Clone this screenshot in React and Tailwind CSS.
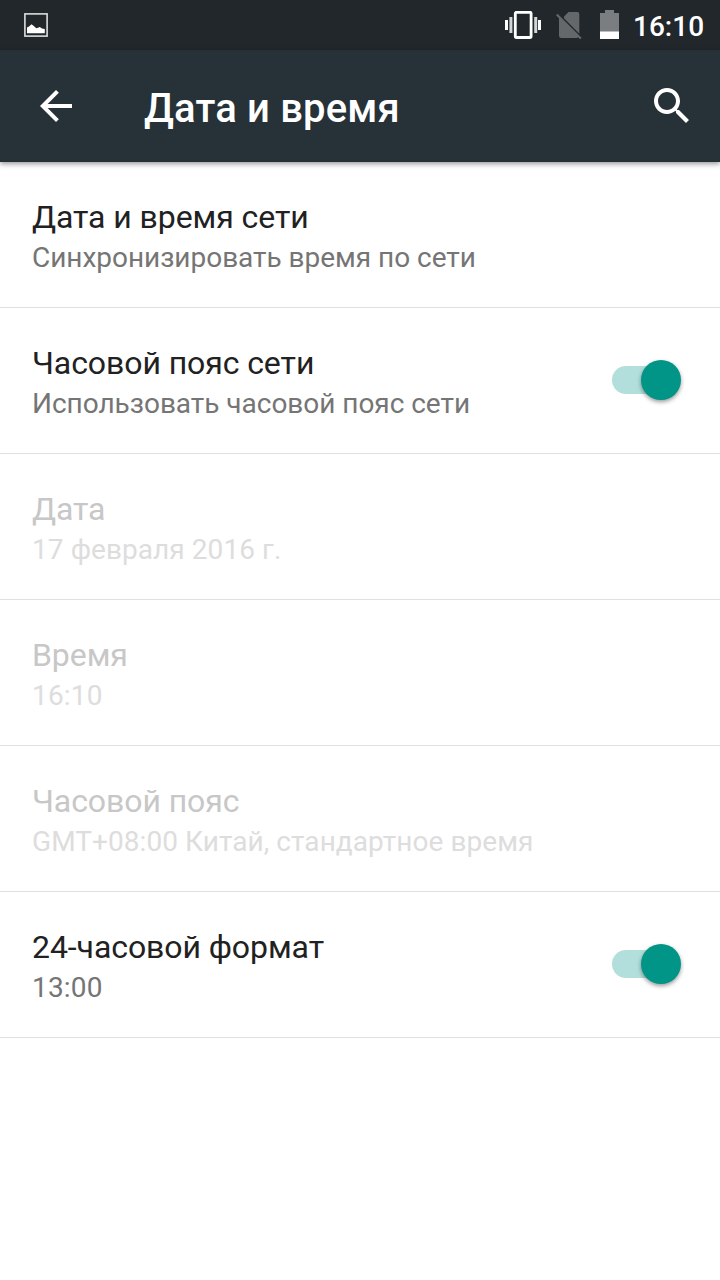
const rows = [
  { title: 'Дата и время сети', summary: 'Синхронизировать время по сети', summaryTracking: 'tracking-[-0.03px]' },
  { title: 'Часовой пояс сети', summary: 'Использовать часовой пояс сети', summaryTracking: 'tracking-[-0.03px]', on: true },
  { title: 'Дата', summary: '17 февраля 2016 г.', summaryTracking: 'tracking-[0.07px]', disabled: true },
  { title: 'Время', summary: '16:10', summaryTracking: 'tracking-[0.2px]', disabled: true },
  { title: 'Часовой пояс', summary: 'GMT+08:00 Китай, стандартное время', summaryTracking: 'tracking-[0.06px]', disabled: true },
  { title: '24-часовой формат', summary: '13:00', summaryTracking: 'tracking-[0.2px]', on: true },
];

function PictureIcon() {
  return (
    <svg className="block h-6 w-6" viewBox="0 0 24 24">
      <rect x="0.9" y="0.9" width="22.2" height="22.2" fill="none" stroke="#dcdddd" strokeWidth="1.6" />
      <path d="M3 20.3V14.5L5 13.4L7.5 11.2L9.5 12.8L12.3 15.2L14 14.8L15.8 13.9L18 15.4L20.8 16V20.3Z" fill="#fff" />
    </svg>
  );
}

function VibrateIcon() {
  return (
    <svg className="block h-7 w-9" viewBox="0 0 36 28">
      <rect x="10.3" y="1.3" width="15.8" height="25.2" rx="1.2" fill="none" stroke="#fff" strokeWidth="2.8" />
      <path d="M0 9h3v10H0zM33 9h3v10h-3z" fill="#fff" />
      <path d="M4.4 6h3v16h-3zM29.2 6h3v16h-3z" fill="#d3d4d5" />
    </svg>
  );
}

function NoSimIcon() {
  return (
    <svg className="block h-7 w-[26px]" viewBox="0 0 26 28">
      <path d="M12.5 1H21.3Q23.3 1 23.3 3V22.8L8 7.3V5.6ZM1.5 2.7L25.6 26.8L24.1 28.3L22.1 26.3Q21.6 27 20.6 27H5.2Q3 27 3 24.8V7.2L0 4.2Z" fill="#64686a" />
    </svg>
  );
}

function BatteryIcon() {
  return (
    <svg className="block h-[29px] w-[19px]" viewBox="0 0 19 29">
      <path d="M5 0h9v3h5v19H0V3h5z" fill="#7b7e80" />
      <path d="M0 21.5h19V29H0z" fill="#fff" />
    </svg>
  );
}

function StatusBar() {
  return (
    <div className="flex h-[50px] items-center bg-[#21272b] pl-6 pr-4">
      <PictureIcon />
      <div className="ml-auto flex items-center">
        <VibrateIcon />
        <div className="ml-[15px]"><NoSimIcon /></div>
        <div className="ml-[18px] mb-px"><BatteryIcon /></div>
        <span className="ml-3.5 mt-[3px] w-[71px] whitespace-nowrap text-[28px] font-medium leading-8 text-white">16:10</span>
      </div>
    </div>
  );
}

function Header() {
  return (
    <header className="relative flex h-28 items-center bg-[#263238] px-6 pl-8 shadow-[0_2px_5px_rgba(0,0,0,0.4)]">
      <button type="button" aria-label="Назад" className="h-12 w-12">
        <svg className="block h-12 w-12" viewBox="0 0 24 24" fill="#fff">
          <path d="M20 11H7.83l5.59-5.59L12 4l-8 8 8 8 1.41-1.41L7.83 13H20v-2z" />
        </svg>
      </button>
      <h1 className="ml-16 mt-1.5 text-[40px] font-medium leading-[48px] tracking-[0.16px] text-white">Дата и время</h1>
      <button type="button" aria-label="Поиск" className="ml-auto h-12 w-12">
        <svg className="block h-12 w-12" viewBox="0 0 24 24" fill="#fff">
          <path d="M15.5 14h-.79l-.28-.27C15.41 12.59 16 11.11 16 9.5 16 5.91 13.09 3 9.5 3S3 5.91 3 9.5 5.91 16 9.5 16c1.61 0 3.09-.59 4.23-1.57l.27.28v.79l5 4.99L20.49 19l-4.99-5zm-6 0C7.01 14 5 11.99 5 9.5S7.01 5 9.5 5 14 7.01 14 9.5 11.99 14 9.5 14z" />
        </svg>
      </button>
    </header>
  );
}

function Toggle() {
  return (
    <div role="switch" aria-checked="true" className="mb-0.5 flex h-10 w-[69px] items-center">
      <div className="flex h-7 w-[58px] items-center rounded-full bg-[#b2dfdb]">
        <div className="ml-[29px] h-10 w-10 shrink-0 rounded-full bg-[#009587] shadow-[0_2px_4px_rgba(0,0,0,0.4)]" />
      </div>
    </div>
  );
}

function Row({ title, summary, summaryTracking, on, disabled }) {
  return (
    <li className="flex h-[146px] items-center justify-between border-b border-[#e0e0e0] pl-8 pr-[39px]">
      <div className="pt-[3px]">
        <div className={`text-[32px] leading-[38px] tracking-[-0.08px] ${disabled ? 'text-[#c7c7c7]' : 'text-[#212121]'}`}>{title}</div>
        <div className={`mt-[5px] text-[28px] leading-[33px] ${summaryTracking} ${disabled ? 'text-[#dddddd]' : 'text-[#757575]'}`}>{summary}</div>
      </div>
      {on && <Toggle />}
    </li>
  );
}

export default function App() {
  return (
    <div className="flex h-[1280px] w-[720px] flex-col overflow-hidden bg-white font-[Roboto,sans-serif]">
      <StatusBar />
      <Header />
      <ul>
        {rows.map((row) => (
          <Row key={row.title} {...row} />
        ))}
      </ul>
    </div>
  );
}
